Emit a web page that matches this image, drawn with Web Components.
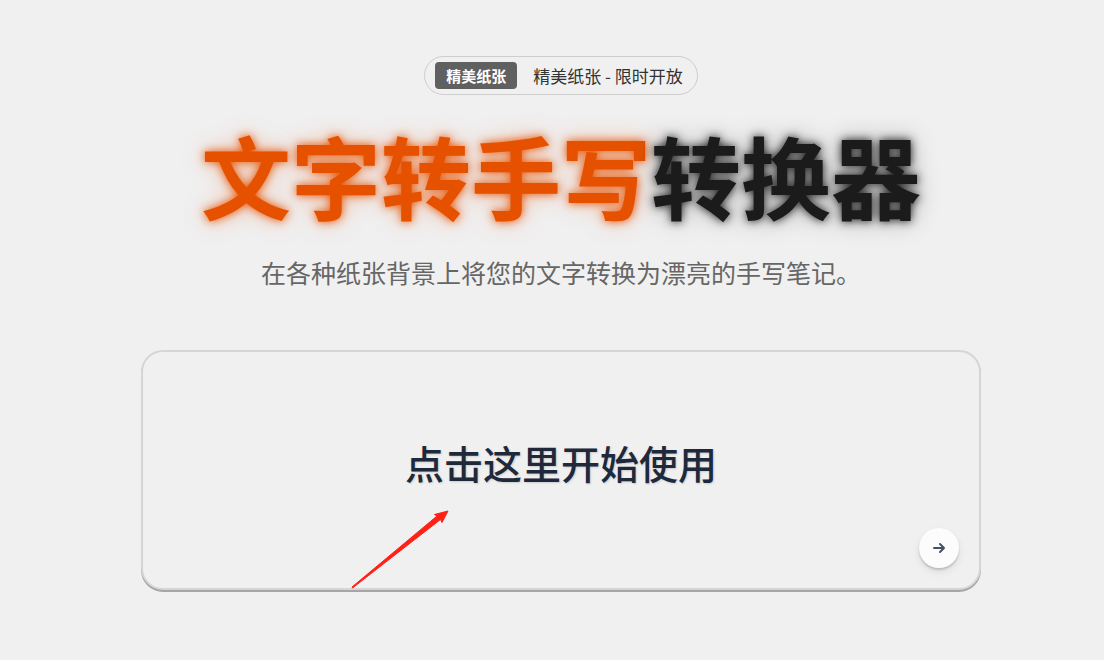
<!DOCTYPE html>
<html lang="zh-CN">
<head>
<meta charset="utf-8">
<meta name="viewport" content="width=device-width, initial-scale=1">
<title>文字转手写转换器</title>
<style>
body { margin: 0; min-height: 100vh; background: #f0f0f0; font-family: "Noto Sans CJK SC", sans-serif; }
</style>
</head>
<body>
<hero-page>
  <promo-pill><span slot="tag">精美纸张</span>精美纸张 - 限时开放</promo-pill>
  <hero-title><span slot="accent">文字转手写</span>转换器</hero-title>
  <hero-subtitle>在各种纸张背景上将您的文字转换为漂亮的手写笔记。</hero-subtitle>
  <start-card>点击这里开始使用</start-card>
</hero-page>
<script>
const define = (name, markup) => customElements.define(name, class extends HTMLElement {
  constructor() {
    super();
    this.attachShadow({ mode: "open" }).innerHTML = markup;
  }
});

define("hero-page", `
<style>
:host { display: block; }
main { display: flex; flex-direction: column; align-items: center; padding: 56px 0 64px 18px; }
</style>
<main><slot></slot></main>`);

define("promo-pill", `
<style>
:host { display: block; }
a { display: flex; align-items: center; gap: 16px; box-sizing: border-box; height: 39px; padding: 0 14px 0 10px; border: 1px solid #cdcdcd; border-radius: 20px; color: #333; font-size: 17px; line-height: 24px; text-decoration: none; white-space: nowrap; }
.tag { padding: 2px 11px 1px; border-radius: 4px; background: #606060; color: #fff; font-size: 15px; font-weight: 700; line-height: 24px; }
</style>
<a href="#papers"><span class="tag"><slot name="tag"></slot></span><span><slot></slot></span></a>`);

define("hero-title", `
<style>
:host { display: block; }
h1 { margin: 30px 0 0; font-size: 90px; font-weight: 700; line-height: 98px; white-space: nowrap; color: #1b1b1b; text-shadow: 0 0 10px #1b1b1b, 0 0 24px rgba(27,27,27,.35); }
.accent { color: #e65100; text-shadow: 0 0 10px #e65100, 0 0 24px rgba(230,81,0,.35); }
</style>
<h1><span class="accent"><slot name="accent"></slot></span><slot></slot></h1>`);

define("hero-subtitle", `
<style>
:host { display: block; }
p { margin: 30px 0 0; color: #666; font-size: 25px; line-height: 38px; }
</style>
<p><slot></slot></p>`);

define("start-card", `
<style>
:host { display: block; position: relative; width: 100%; max-width: 840px; margin-top: 59px; }
button { display: flex; flex-direction: column; width: 100%; min-height: 240px; padding: 20px; border: 2px solid #d5d5d5; border-radius: 22px; background: #f0f0f0; box-shadow: 0 2px 0 #a6a6a6; font: inherit; cursor: pointer; }
.label { flex: 1; display: grid; place-items: center; align-self: center; margin-top: 24px; color: #1e293b; font-family: KaiTi, STKaiti, "Noto Sans CJK SC", sans-serif; font-size: 39px; font-weight: 500; line-height: 48px; text-shadow: 1px 1px 2px rgba(0,0,0,.15); }
.go { display: grid; place-items: center; align-self: flex-end; width: 40px; height: 40px; border-radius: 50%; background: #fcfcfc; box-shadow: 0 2px 2px rgba(0,0,0,.16), 0 4px 8px rgba(0,0,0,.08); }
.go svg { display: block; }
.pointer { position: absolute; left: 210px; top: 160px; pointer-events: none; }
</style>
<button type="button">
  <span class="label"><span><slot></slot></span></span>
  <span class="go"><svg width="16" height="16" viewBox="0 0 16 16" fill="none" stroke="#475063" stroke-width="2" stroke-linecap="round" stroke-linejoin="round" aria-hidden="true"><path d="M3 8h10M9 4l4 4-4 4"/></svg></span>
</button>
<svg class="pointer" width="99" height="79" viewBox="0 0 99 79" aria-hidden="true"><path d="M1 77 86 6 83.500 4.500 97 1 91 12.500 89.500 9.500 1.500 78Z" fill="#ff2116" stroke="#ff2116" stroke-width="1" stroke-linejoin="round"/></svg>`);
</script>
</body>
</html>
